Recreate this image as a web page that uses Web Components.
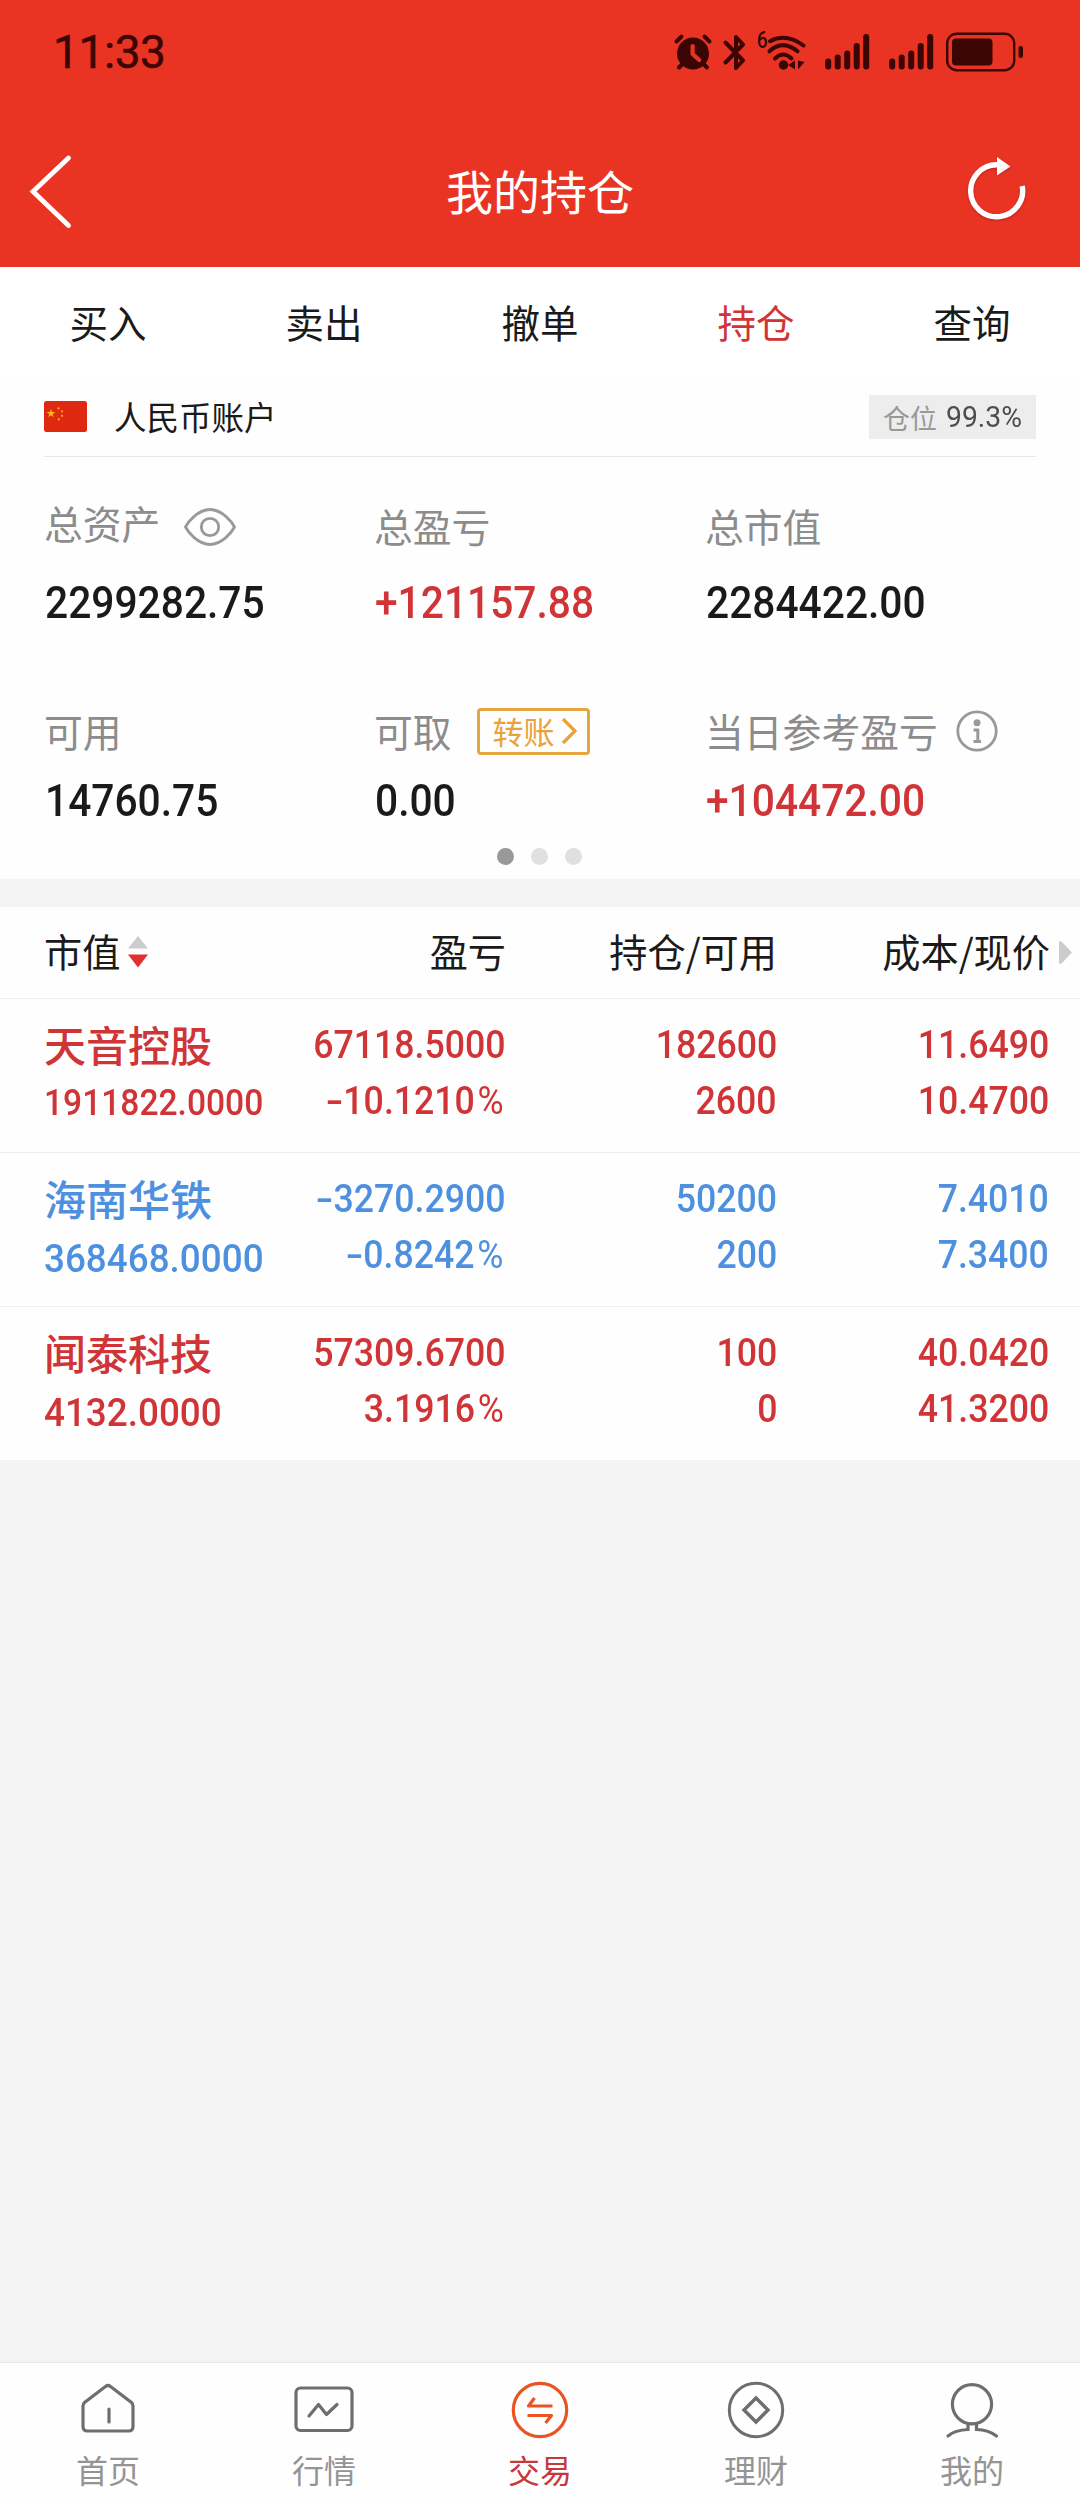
<!DOCTYPE html>
<html lang="zh-CN">
<head>
<meta charset="utf-8">
<title>我的持仓</title>
<style>
  :root {
    --brand: #e93423;
    --up: #d03436;
    --down: #4d90e0;
    --ink: #1a1a1a;
    --muted: #8c8c8c;
    --line: #ededed;
    --surface: #fefefe;
    --num: Roboto, "Liberation Sans", sans-serif;
  }

  body {
    margin: 0;
    background: #f4f4f4;
    font-family: "Noto Sans CJK SC", sans-serif;
    color: var(--ink);
  }
</style>
</head>
<body>
<holdings-page></holdings-page>

<script>
  const ICONS = {
    alarm: [38, 36, `<g fill="none" stroke="currentColor" stroke-width="4" stroke-linecap="round">
      <path d="M2.5 7.5 7.5 2.5M30.5 2.5l5 5M9 29.5l-4 4M29 29.5l4 4"/></g>
      <circle cx="19" cy="19.5" r="16" fill="currentColor"/>
      <path d="M18.6 12v8l6.6 6" fill="none" stroke="#e93423" stroke-width="4.2" stroke-linecap="round" stroke-linejoin="round"/>`],
    bluetooth: [24, 37, `<path d="M2.5 8.5 20 26.5l-7 7.5V3l7 7.5L2.5 28.5" fill="none" stroke="currentColor" stroke-width="4" stroke-linecap="round" stroke-linejoin="round"/>`],
    wifi: [40, 37, `<g fill="none" stroke="currentColor" stroke-width="4" stroke-linecap="round">
      <path d="M4 7.2Q20-1.5 37.5 11.5M3.5 17.3Q16.5 5 31.5 17.3M9 24.5Q17 16.5 25.5 24.5"/></g>
      <circle cx="17.5" cy="31" r="4.7" fill="currentColor"/>
      <path d="M22 31l7-4.5v9zM32 26.5v9l6.5-7.5z" fill="currentColor"/>`],
    signal: [45, 36, `<path d="M3.2 27.5v5M12.7 23.5v9M22.2 19.5v13M31.7 12v20.5M41.2 3v29.5" stroke="currentColor" stroke-width="6" stroke-linecap="round"/>`],
    battery: [78, 40, `<rect x="1.2" y="1.7" width="67" height="36.5" rx="9.5" fill="none" stroke="currentColor" stroke-width="2.4"/>
      <rect x="6" y="6.5" width="40.5" height="27" rx="4" fill="currentColor"/>
      <rect x="72.5" y="14" width="4.5" height="12" rx="2.2" fill="currentColor"/>`],
    back: [44, 76, `<path d="M39.5 4 4 37.5 39.5 71.5" fill="none" stroke="currentColor" stroke-width="4.8" stroke-linecap="round"/>`],
    refresh: [60, 68, `<path d="M56.2 31A26 26 0 1 1 31 9.800" fill="none" stroke="currentColor" stroke-width="5.4"/>
      <path d="M31 2 44.5 11.500 31 20.5z" fill="currentColor"/>`],
    flag: [43, 31, `<rect width="43" height="31" rx="2.5" fill="#de2910"/>
      <g fill="#ffb617"><path d="M7 7.8l1.1 3.2h3.3l-2.7 2 1 3.3L7 14.3l-2.7 2 1-3.3-2.7-2h3.3z"/>
      <circle cx="14.5" cy="7.3" r="1.1"/><circle cx="18" cy="10.3" r="1.1"/><circle cx="18" cy="14.8" r="1.1"/><circle cx="14.8" cy="18.3" r="1.1"/></g>`],
    eye: [52, 38, `<g fill="none" stroke="currentColor" stroke-width="2.8"><path d="M1.5 19C4 14 14 1.500 26 1.500S48 14 50.500 19C48 24 38 36.500 26 36.500S4 24 1.500 19z"/>
      <circle cx="26" cy="19" r="8.7"/></g>`],
    info: [42, 42, `<circle cx="21" cy="21" r="19.2" fill="none" stroke="currentColor" stroke-width="2.8"/>
      <circle cx="21" cy="12.7" r="3.5" fill="currentColor"/>
      <path d="M17.5 20h4.300v11M17.5 31.500h7.500" fill="none" stroke="currentColor" stroke-width="3"/>`],
    chevron: [17, 28, `<path d="M2 2 14 14 2 26" fill="none" stroke="currentColor" stroke-width="3.2"/>`],
    sort: [20, 32, `<path d="M10 0 20 12.5H0z" fill="#ccc"/><path d="M0 18.5h20L10 31.5z" fill="#e03030"/>`],
    more: [13, 23, `<path d="M0 0 3 1 13 11.5 3 22 0 23z" fill="#ccc"/>`],
    home: [60, 60, `<g fill="none" stroke="currentColor" stroke-width="3.2" stroke-linecap="round" stroke-linejoin="round">
      <path d="M27.5 5.500Q30 3.500 32.5 5.500L53.5 21.500Q55 23 55 25V45.500Q55 50 50.500 50H9.500Q5 50 5 45.500V25Q5 23 6.500 21.500z"/><path d="M31 28v13"/></g>`],
    market: [60, 60, `<g fill="none" stroke="currentColor" stroke-width="3.2" stroke-linecap="round" stroke-linejoin="round">
      <rect x="2" y="7" width="56" height="42.5" rx="4.5"/><path d="M15 35 24.5 23.500 32.500 33.500 43 23.500"/></g>`],
    trade: [60, 60, `<g fill="none" stroke="currentColor" stroke-width="3.2" stroke-linejoin="round">
      <circle cx="30" cy="29" r="26.7"/><path d="M24.5 17 18.500 25H42.500M17.500 34.500H41.500L35.500 42"/></g>`],
    finance: [60, 60, `<g fill="none" stroke="currentColor" stroke-width="3">
      <circle cx="30" cy="29" r="26.7"/><path d="M30 17 42 29 30 41 18 29z" stroke-width="3.4"/></g>`],
    mine: [60, 60, `<g fill="none" stroke="currentColor" stroke-width="3.2" stroke-linecap="round">
      <circle cx="30" cy="23.200" r="19.6"/><path d="M26 43.500V48.500Q13 49 6 55M34.500 43.500V48.500Q47 49 54.500 55"/></g>`],
  };

  class AppIcon extends HTMLElement {
    connectedCallback() {
      const [w, h, body] = ICONS[this.getAttribute('name')];
      this.attachShadow({ mode: 'open' }).innerHTML = `
        <style>
          :host { display: inline-block; flex: none; }
          svg { display: block; overflow: visible; }
        </style>
        <svg width="${w}" height="${h}" viewBox="0 0 ${w} ${h}" aria-hidden="true">${body}</svg>`;
    }
  }

  // Narrow numerals: the regular face squeezed towards its aligned edge.
  class DinText extends HTMLElement {
    connectedCallback() {
      this.attachShadow({ mode: 'open' }).innerHTML = `
        <style>
          :host {
            display: inline-block;
            font: 500 39.4px/1 var(--num);
            white-space: nowrap;
            transform: scaleX(var(--squeeze, 0.905));
            transform-origin: left;
          }
          :host([end]) { transform-origin: right; }
        </style>
        <slot></slot>`;
    }
  }

  class StatusBar extends HTMLElement {
    connectedCallback() {
      this.attachShadow({ mode: 'open' }).innerHTML = `
        <style>
          :host {
            display: flex;
            align-items: center;
            height: 104px;
            box-sizing: border-box;
            padding: 0 56px 0 53px;
            background: var(--brand);
            color: #3a0503;
          }
          time { flex: 1; font: 400 46px/1 var(--num); letter-spacing: -.4px; -webkit-text-stroke: .5px; }
          .gen { font: 500 24px/1 var(--num); margin: 0 0 24px 10px; width: 9px; transform: scaleX(.8); transform-origin: left; }
        </style>
        <time>11:33</time>
        <app-icon name="alarm"></app-icon>
        <app-icon name="bluetooth" style="margin-left:11px"></app-icon>
        <span class="gen">6</span>
        <app-icon name="wifi"></app-icon>
        <app-icon name="signal" style="margin-left:19px"></app-icon>
        <app-icon name="signal" style="margin-left:19px"></app-icon>
        <app-icon name="battery" style="margin-left:12px"></app-icon>`;
    }
  }

  class TitleBar extends HTMLElement {
    connectedCallback() {
      this.attachShadow({ mode: 'open' }).innerHTML = `
        <style>
          :host {
            display: grid;
            grid-template-columns: 1fr auto 1fr;
            align-items: center;
            height: 163px;
            box-sizing: border-box;
            padding: 0 54px 0 29px;
            background: var(--brand);
            color: #fff;
          }
          h1 { margin: 8px 0 0 25px; font-size: 47px; font-weight: 400; line-height: 1; }
          .back { margin-top: 13px; }
          .refresh { justify-self: end; margin-top: 7px; filter: drop-shadow(0 1px 1px rgba(120, 0, 0, .4)); }
        </style>
        <app-icon class="back" name="back"></app-icon>
        <h1><slot></slot></h1>
        <app-icon class="refresh" name="refresh"></app-icon>`;
    }
  }

  class TradeTabs extends HTMLElement {
    connectedCallback() {
      const active = this.getAttribute('active');
      const tabs = ['买入', '卖出', '撤单', '持仓', '查询'];
      this.attachShadow({ mode: 'open' }).innerHTML = `
        <style>
          :host {
            display: grid;
            grid-template-columns: repeat(5, 1fr);
            align-items: center;
            height: 111px;
            box-sizing: border-box;
            padding-bottom: 3px;
            background: #fff;
            text-align: center;
            font-size: 38.5px;
            line-height: 1;
          }
          .active { color: var(--up); }
        </style>
        ${tabs.map((tab) => `<span class="${tab === active ? 'active' : ''}">${tab}</span>`).join('')}`;
    }
  }

  class AccountHeader extends HTMLElement {
    connectedCallback() {
      this.attachShadow({ mode: 'open' }).innerHTML = `
        <style>
          :host {
            display: flex;
            align-items: center;
            height: 79px;
            box-sizing: border-box;
            margin: 0 44px;
            border-bottom: 1px solid #e8e8e8;
          }
          app-icon { margin-bottom: 2px; }
          .name { flex: 1; margin: 0 0 2px 27px; font-size: 32.5px; line-height: 1; }
          .ratio {
            display: flex;
            align-items: center;
            width: 167px;
            height: 44px;
            box-sizing: border-box;
            padding-left: 14px;
            background: #ededed;
            color: #999;
            font-size: 27px;
            line-height: 1;
          }
          din-text { --squeeze: .96; font-size: 29.5px; font-weight: 400; color: #4d4d4d; margin: 2px 0 0 9px; }
        </style>
        <app-icon name="flag"></app-icon>
        <span class="name">人民币账户</span>
        <span class="ratio">仓位<din-text>99.3%</din-text></span>`;
    }
  }

  class AssetItem extends HTMLElement {
    connectedCallback() {
      const tone = this.hasAttribute('up') ? 'var(--up)' : 'var(--ink)';
      this.attachShadow({ mode: 'open' }).innerHTML = `
        <style>
          :host { display: block; }
          .label {
            display: flex;
            align-items: center;
            height: 60px;
            color: var(--muted);
            font-size: 38.8px;
            line-height: 1;
            white-space: nowrap;
          }
          ::slotted([slot="label"]) { margin-bottom: 2px; }
          din-text { display: block; --squeeze: .905; margin: var(--value-gap, 24px) 0 0 1px; font-size: 45px; color: ${tone}; }
        </style>
        <div class="label"><slot name="label"></slot><slot name="extra"></slot></div>
        <din-text>${this.getAttribute('value')}</din-text>`;
    }
  }

  class AssetSummary extends HTMLElement {
    connectedCallback() {
      this.attachShadow({ mode: 'open' }).innerHTML = `
        <style>
          :host { display: block; height: 422px; }
          .grid {
            display: grid;
            grid-template-columns: 330px 331px 1fr;
            grid-template-rows: 205px 1fr;
            height: 335px;
            padding: 39px 0 0 44px;
            box-sizing: border-box;
          }
          .second { --value-gap: 17px; }
          .raised { margin-bottom: 7px; }
          .transfer {
            display: flex;
            align-items: center;
            width: 113px;
            height: 47px;
            box-sizing: border-box;
            margin-left: 25px;
            padding: 0 0 2px 13px;
            border: 3px solid #e5a640;
            border-radius: 4px;
            color: #e9a23b;
            font-size: 31px;
          }
          .dots { display: flex; justify-content: center; gap: 17px; padding: 56px 1px 0 0; }
          .dots i { width: 17px; height: 17px; border-radius: 50%; background: #e0e0e0; }
          .dots i:first-child { background: #999; }
        </style>
        <div class="grid">
          <asset-item value="2299282.75">
            <span slot="label" class="raised">总资产</span>
            <app-icon slot="extra" name="eye" style="margin:2px 0 0 24px;color:#999"></app-icon>
          </asset-item>
          <asset-item value="+121157.88" up><span slot="label">总盈亏</span></asset-item>
          <asset-item value="2284422.00"><span slot="label">总市值</span></asset-item>
          <asset-item class="second" value="14760.75"><span slot="label">可用</span></asset-item>
          <asset-item class="second" value="0.00">
            <span slot="label">可取</span>
            <span slot="extra" class="transfer">转账<app-icon name="chevron" style="margin:2px 0 0 6px"></app-icon></span>
          </asset-item>
          <asset-item class="second" value="+104472.00" up>
            <span slot="label">当日参考盈亏</span>
            <app-icon slot="extra" name="info" style="margin-left:18px;color:#999"></app-icon>
          </asset-item>
        </div>
        <div class="dots"><i></i><i></i><i></i></div>`;
    }
  }

  class HoldingsHead extends HTMLElement {
    connectedCallback() {
      this.attachShadow({ mode: 'open' }).innerHTML = `
        <style>
          :host {
            display: grid;
            grid-template-columns: 232px 230px 271px 273px 22px;
            align-items: center;
            height: 92px;
            box-sizing: border-box;
            padding-left: 44px;
            border-bottom: 1px solid var(--line);
            font-size: 38.2px;
            line-height: 1;
            text-align: right;
          }
          span { margin-bottom: 2px; }
          .first { display: flex; align-items: center; gap: 8px; }
          .first app-icon { margin-top: 2px; }
          .more { margin-left: 9px; }
        </style>
        <span class="first">市值<app-icon name="sort"></app-icon></span>
        <span>盈亏</span>
        <span>持仓/可用</span>
        <span>成本/现价</span>
        <app-icon class="more" name="more"></app-icon>`;
    }
  }

  class HoldingRow extends HTMLElement {
    connectedCallback() {
      const get = (attr) => this.getAttribute(attr);
      const number = (attr) => get(attr)
        .replace('-', '<span class="minus">-</span>')
        .replace('%', '<span class="percent">%</span>');
      const pair = (a, b) => `<div class="cell"><din-text end>${number(a)}</din-text><din-text end>${number(b)}</din-text></div>`;
      this.attachShadow({ mode: 'open' }).innerHTML = `
        <style>
          :host {
            display: grid;
            grid-template-columns: 232px 229px 272px 272px;
            height: 154px;
            box-sizing: border-box;
            padding: 24px 0 0 44px;
            border-bottom: 1px solid var(--line);
            color: var(--up);
          }
          :host([down]) { color: var(--down); }
          :host(:last-of-type) { height: 153px; border-bottom: 0; }
          .name { font-size: 42px; font-weight: 500; line-height: 1; height: 62px; }
          .value { --squeeze: .935; }
          .value.long { --squeeze: .92; font-size: 36.5px; }
          .cell { display: flex; flex-direction: column; align-items: flex-end; gap: 16.6px; padding-top: 2px; }
          .minus { display: inline-block; transform: scaleX(1.45); transform-origin: right; margin-left: 5px; }
          .percent { margin: 0 1.5px 0 3px; font-weight: 400; }
        </style>
        <div>
          <div class="name">${get('name')}</div>
          <din-text class="value ${get('value').length > 11 ? 'long' : ''}">${get('value')}</din-text>
        </div>
        ${pair('profit', 'rate')}
        ${pair('held', 'usable')}
        ${pair('cost', 'price')}`;
    }
  }

  class BottomNav extends HTMLElement {
    connectedCallback() {
      const items = [['home', '首页'], ['market', '行情'], ['trade', '交易'], ['finance', '理财'], ['mine', '我的']];
      this.attachShadow({ mode: 'open' }).innerHTML = `
        <style>
          :host {
            display: grid;
            grid-template-columns: repeat(5, 1fr);
            height: 142px;
            box-sizing: border-box;
            border-top: 1px solid #e8e8e8;
            background: var(--surface);
          }
          a {
            display: flex;
            flex-direction: column;
            align-items: center;
            gap: 12px;
            padding-top: 18px;
            color: #949494;
            font-size: 32px;
            line-height: 1;
          }
          app-icon { color: #6e6e6e; }
          .active { color: #c8373a; }
          .active app-icon { color: #ea5420; }
        </style>
        ${items.map(([icon, text]) => `<a class="${icon === 'trade' ? 'active' : ''}"><app-icon name="${icon}"></app-icon>${text}</a>`).join('')}`;
    }
  }

  class HoldingsPage extends HTMLElement {
    connectedCallback() {
      this.attachShadow({ mode: 'open' }).innerHTML = `
        <style>
          :host { display: flex; flex-direction: column; width: 1080px; height: 2504px; }
          section { background: var(--surface); }
          .holdings { margin-top: 28px; }
          bottom-nav { margin-top: auto; }
        </style>
        <status-bar></status-bar>
        <title-bar>我的持仓</title-bar>
        <trade-tabs active="持仓"></trade-tabs>
        <section>
          <account-header></account-header>
          <asset-summary></asset-summary>
        </section>
        <section class="holdings">
          <holdings-head></holdings-head>
          <holding-row name="天音控股" value="1911822.0000" profit="67118.5000" rate="-10.1210%" held="182600" usable="2600" cost="11.6490" price="10.4700"></holding-row>
          <holding-row down name="海南华铁" value="368468.0000" profit="-3270.2900" rate="-0.8242%" held="50200" usable="200" cost="7.4010" price="7.3400"></holding-row>
          <holding-row name="闻泰科技" value="4132.0000" profit="57309.6700" rate="3.1916%" held="100" usable="0" cost="40.0420" price="41.3200"></holding-row>
        </section>
        <bottom-nav></bottom-nav>`;
    }
  }

  customElements.define('app-icon', AppIcon);
  customElements.define('din-text', DinText);
  customElements.define('status-bar', StatusBar);
  customElements.define('title-bar', TitleBar);
  customElements.define('trade-tabs', TradeTabs);
  customElements.define('account-header', AccountHeader);
  customElements.define('asset-item', AssetItem);
  customElements.define('asset-summary', AssetSummary);
  customElements.define('holdings-head', HoldingsHead);
  customElements.define('holding-row', HoldingRow);
  customElements.define('bottom-nav', BottomNav);
  customElements.define('holdings-page', HoldingsPage);
</script>
</body>
</html>
